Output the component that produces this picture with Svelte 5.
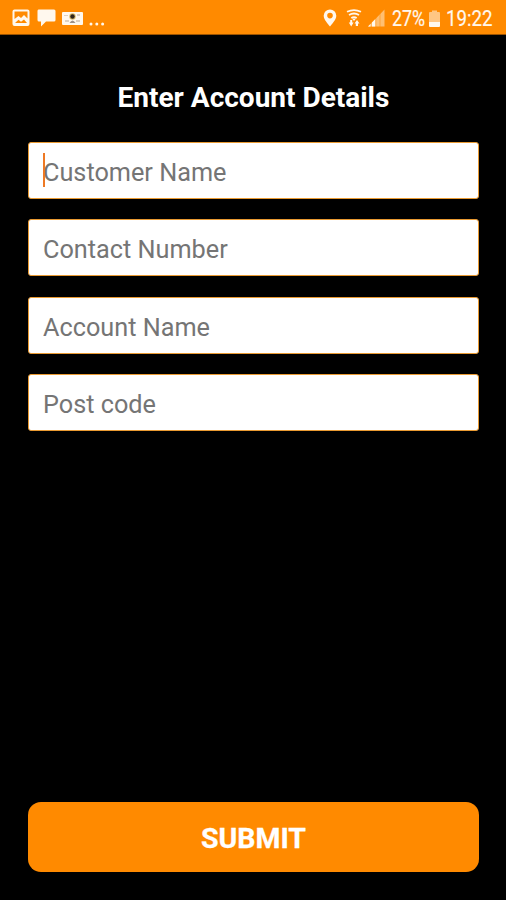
<script>
  const fields = ['Customer Name', 'Contact Number', 'Account Name', 'Post code'];
</script>

<div class="screen">
  <header class="status">
    <div class="notices">
      <svg width="18" height="18" viewBox="0 0 18 18">
        <path fill-rule="evenodd" d="M2.5 0.5H15.5Q17.5 0.5 17.5 2.5V15Q17.5 17 15.5 17H2.5Q.5 17 .5 15V2.5Q.5.5 2.5.5ZM2.5 2.5V10L6.5 7L9 9L12 6L15.5 9.5V2.5ZM3 14H15L12 10.5L9 12.7L6.5 10.7Z" />
      </svg>
      <svg class="chat" width="19" height="18" viewBox="0 0 19 18">
        <path d="M1.5.5H17Q18.5.5 18.5 2V11Q18.5 12.5 17 12.5H9L4 17.5V12.5H2Q.5 12.5.5 11V2Q.5.5 1.5.5Z" />
      </svg>
      <svg class="picture" width="21" height="13" viewBox="0 0 21 13">
        <rect width="21" height="13" rx="1" />
        <path fill="#ddd0c2" d="M2 3h4v1H2zM15 2h3v2h-3zM3 8h4v2H3zM14 8h4v2h-4z" />
        <circle cx="10.5" cy="4.5" r="3.2" fill="#d8b968" />
        <circle cx="10.5" cy="4.5" r="2.2" fill="#30241b" />
        <path fill="#9d9189" d="M7.5 11Q10.5 6 13.5 11Z" />
      </svg>
      <svg class="dots" width="16" height="4" viewBox="0 0 16 4">
        <circle cx="2" cy="2" r="1.5" /><circle cx="7.8" cy="2" r="1.5" /><circle cx="13.6" cy="2" r="1.5" />
      </svg>
    </div>
    <div class="system">
      <svg width="14" height="18" viewBox="0 0 14 18">
        <path fill-rule="evenodd" d="M7 .5A6.3 6.3 0 0 0 .7 6.8C.7 10.7 5 14.8 7 17.5C9 14.8 13.3 10.7 13.3 6.8A6.3 6.3 0 0 0 7 .5ZM7 3.8A2.8 2.8 0 1 1 7 9.4A2.8 2.8 0 0 1 7 3.8Z" />
      </svg>
      <svg class="wifi" width="16" height="18" viewBox="0 0 16 18">
        <path class="line" d="M1 2.7Q8-.5 15 2.7M3 6Q8 3 13 6M5.3 9Q8 7.3 10.7 9" />
        <path d="M6 9.5H10L8 12ZM4.2 11V13.5H2.8L5.2 17.5L7.6 13.5H6.2V11ZM9.8 17V14.5H8.5L11 11L13.5 14.5H12V17Z" />
      </svg>
      <svg class="signal" width="17" height="18" viewBox="0 0 17 18">
        <path opacity=".48" d="M4 13.5 16.5.5V17.5H0Z" />
        <path d="M0 17.5 2.7 14.8V17.5ZM3.7 13.8 7.4 10V17.5H3.7Z" />
        <path class="gap" d="M3.2 9V18M7.8 5V18M12 1V18" />
      </svg>
      <span class="percent">27%</span>
      <svg class="battery" width="11" height="18" viewBox="0 0 11 18">
        <path opacity=".55" d="M3 .5H8V2H10Q11 2 11 3V12H0V3Q0 2 1 2H3Z" />
        <path d="M0 12H11V16Q11 17 10 17H1Q0 17 0 16Z" />
      </svg>
      <span class="time">19:22</span>
    </div>
  </header>

  <main>
    <h1>Enter Account Details</h1>
    <form>
      {#each fields as label, i}
        <label>
          <input type="text" placeholder={label} aria-label={label} />
          {#if i === 0}<span class="caret"></span>{/if}
        </label>
      {/each}
      <button type="button"><span>SUBMIT</span></button>
    </form>
  </main>
</div>

<style>
  :global(body) { margin: 0; background: #000; }
  .screen {
    box-sizing: border-box;
    width: 506px;
    height: 900px;
    display: flex;
    flex-direction: column;
    overflow: hidden;
    background: #000;
    color: #fff;
    font-family: Roboto, sans-serif;
  }
  .status {
    box-sizing: border-box;
    height: 35px;
    flex: none;
    display: flex;
    justify-content: space-between;
    padding: 0 13px 0 12px;
    background: #ff8a00;
    border-bottom: 1px solid #9b5200;
  }
  svg { display: block; flex: none; fill: #fff8ee; }
  .notices { display: flex; align-items: flex-start; padding-top: 9px; }
  .chat { margin-left: 7px; }
  .picture { margin: 3px 0 0 6px; }
  .dots { margin: 13px 0 0 6px; }
  .system { display: flex; align-items: flex-start; padding-top: 9px; }
  .wifi { margin-left: 9px; }
  .line { fill: none; stroke: #fff8ee; stroke-width: 1.8; }
  .signal { margin-left: 6px; }
  .gap { fill: none; stroke: #ff8a00; stroke-width: .5; }
  .battery { margin: 1px 0 0 4px; }
  .percent, .time {
    display: block;
    height: 20px;
    font-size: 22px;
    line-height: 20px;
    white-space: nowrap;
    color: #fff8ee;
    -webkit-text-stroke: .2px #fff8ee;
    transform-origin: left center;
  }
  .percent { width: 33px; margin-left: 7px; transform: scaleX(.81); }
  .time { width: 47px; margin-left: 6px; transform: scaleX(.85); }
  main { flex: 1; display: flex; flex-direction: column; padding: 46px 27px 28px 28px; }
  h1 { margin: 0; height: 34px; line-height: 34px; text-align: center; font-size: 28px; font-weight: 700; white-space: nowrap; }
  form { flex: 1; display: flex; flex-direction: column; gap: 20px; padding-top: 27px; }
  label { position: relative; display: block; height: 57px; }
  label:nth-child(3) { margin-top: 1px; }
  input {
    box-sizing: border-box;
    display: block;
    width: 100%;
    height: 57px;
    margin: 0;
    padding: 3px 13px 0 14px;
    border: 1px solid #e99a32;
    border-radius: 3px;
    outline: 0;
    background: #fff;
    color: #333;
    font: 400 25.25px Roboto, sans-serif;
  }
  input::placeholder { color: #757575; opacity: 1; }
  .caret { position: absolute; left: 15px; top: 11px; width: 2px; height: 34px; background: #ee7924; }
  button {
    height: 70px;
    margin: auto 0 0;
    padding: 2px 0 0;
    border: 0;
    border-radius: 13px;
    background: #ff8a00;
    color: #fff;
    font: 700 28.5px Roboto, sans-serif;
    -webkit-text-stroke: .3px #fff;
  }
</style>
